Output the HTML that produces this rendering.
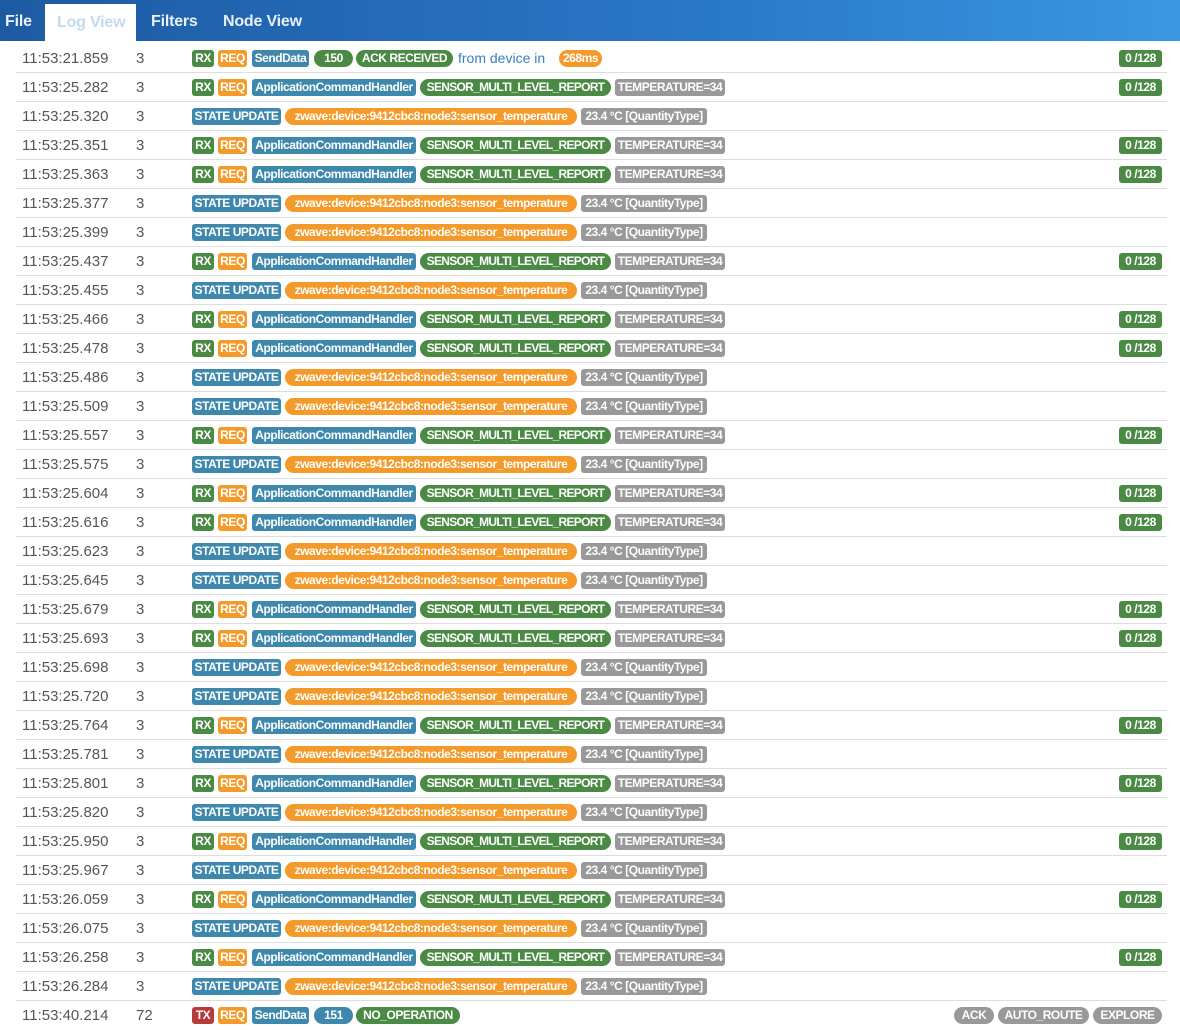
<!DOCTYPE html>
<html><head><meta charset="utf-8"><style>
*{margin:0;padding:0;box-sizing:border-box}
body{width:1180px;height:1029px;overflow:hidden;background:#fff;font-family:"Liberation Sans",sans-serif;position:relative}
.hdr{position:absolute;left:0;top:0;width:1180px;height:41px;background:linear-gradient(90deg,#1d5aa2 0%,#2a78c8 60%,#3a97e2 100%)}
.tab{position:absolute;top:13px;font-size:16px;color:#e8f0fa;font-weight:bold;letter-spacing:-0.2px;white-space:nowrap}
.tab.act{top:4px;height:37px;background:#fff;color:#c5d8ee;padding:10px 12px 0;font-weight:bold}
.row{position:absolute;left:16px;width:1151px;height:29px;border-bottom:1px solid #ddd}
.t{position:absolute;left:6px;top:6px;font-size:15px;color:#555}
.l{position:absolute;left:120px;top:6px;font-size:15px;color:#555}
.b{position:absolute;top:6px;height:17px;line-height:17px;font-size:12px;font-weight:bold;color:#fff;text-align:center;border-radius:3px;letter-spacing:-0.45px;white-space:nowrap;overflow:hidden}
.p{border-radius:9px}
.s{letter-spacing:-0.7px}
.g{background:#4a8a44}.o{background:#f39a2a}.bl{background:#3f88ad}.gr{background:#999}.r{background:#b73b3b}
</style></head><body>
<div class="hdr">
<span class="tab" style="left:5px">File</span>
<span class="tab act" style="left:45px;width:91px">Log View</span>
<span class="tab" style="left:151px">Filters</span>
<span class="tab" style="left:223px">Node View</span>
</div>

<div class="row" style="top:44px"><span class="t">11:53:21.859</span><span class="l">3</span><span class="b g" style="left:176px;width:22px">RX</span><span class="b o" style="left:202px;width:29px">REQ</span><span class="b bl" style="left:236px;width:57px">SendData</span><span class="b g p" style="left:298px;width:39px">150</span><span class="b g p" style="left:340px;width:97px">ACK RECEIVED</span><span style="position:absolute;left:442px;top:6px;font-size:14px;color:#3a7fc0">from device in</span><span class="b o p" style="left:543px;width:43px">268ms</span><span class="b g" style="left:1103px;width:43px">0 /128</span></div>

<div class="row" style="top:73px"><span class="t">11:53:25.282</span><span class="l">3</span><span class="b g" style="left:176px;width:22px">RX</span><span class="b o" style="left:202px;width:29px">REQ</span><span class="b bl" style="left:236px;width:164px">ApplicationCommandHandler</span><span class="b g p s" style="left:404px;width:191px">SENSOR_MULTI_LEVEL_REPORT</span><span class="b gr" style="left:599px;width:110px">TEMPERATURE=34</span><span class="b g" style="left:1103px;width:43px">0 /128</span></div>
<div class="row" style="top:102px"><span class="t">11:53:25.320</span><span class="l">3</span><span class="b bl" style="left:176px;width:89px">STATE UPDATE</span><span class="b o p" style="left:269px;width:292px">zwave:device:9412cbc8:node3:sensor_temperature</span><span class="b gr" style="left:565px;width:126px">23.4 °C [QuantityType]</span></div>
<div class="row" style="top:131px"><span class="t">11:53:25.351</span><span class="l">3</span><span class="b g" style="left:176px;width:22px">RX</span><span class="b o" style="left:202px;width:29px">REQ</span><span class="b bl" style="left:236px;width:164px">ApplicationCommandHandler</span><span class="b g p s" style="left:404px;width:191px">SENSOR_MULTI_LEVEL_REPORT</span><span class="b gr" style="left:599px;width:110px">TEMPERATURE=34</span><span class="b g" style="left:1103px;width:43px">0 /128</span></div>
<div class="row" style="top:160px"><span class="t">11:53:25.363</span><span class="l">3</span><span class="b g" style="left:176px;width:22px">RX</span><span class="b o" style="left:202px;width:29px">REQ</span><span class="b bl" style="left:236px;width:164px">ApplicationCommandHandler</span><span class="b g p s" style="left:404px;width:191px">SENSOR_MULTI_LEVEL_REPORT</span><span class="b gr" style="left:599px;width:110px">TEMPERATURE=34</span><span class="b g" style="left:1103px;width:43px">0 /128</span></div>
<div class="row" style="top:189px"><span class="t">11:53:25.377</span><span class="l">3</span><span class="b bl" style="left:176px;width:89px">STATE UPDATE</span><span class="b o p" style="left:269px;width:292px">zwave:device:9412cbc8:node3:sensor_temperature</span><span class="b gr" style="left:565px;width:126px">23.4 °C [QuantityType]</span></div>
<div class="row" style="top:218px"><span class="t">11:53:25.399</span><span class="l">3</span><span class="b bl" style="left:176px;width:89px">STATE UPDATE</span><span class="b o p" style="left:269px;width:292px">zwave:device:9412cbc8:node3:sensor_temperature</span><span class="b gr" style="left:565px;width:126px">23.4 °C [QuantityType]</span></div>
<div class="row" style="top:247px"><span class="t">11:53:25.437</span><span class="l">3</span><span class="b g" style="left:176px;width:22px">RX</span><span class="b o" style="left:202px;width:29px">REQ</span><span class="b bl" style="left:236px;width:164px">ApplicationCommandHandler</span><span class="b g p s" style="left:404px;width:191px">SENSOR_MULTI_LEVEL_REPORT</span><span class="b gr" style="left:599px;width:110px">TEMPERATURE=34</span><span class="b g" style="left:1103px;width:43px">0 /128</span></div>
<div class="row" style="top:276px"><span class="t">11:53:25.455</span><span class="l">3</span><span class="b bl" style="left:176px;width:89px">STATE UPDATE</span><span class="b o p" style="left:269px;width:292px">zwave:device:9412cbc8:node3:sensor_temperature</span><span class="b gr" style="left:565px;width:126px">23.4 °C [QuantityType]</span></div>
<div class="row" style="top:305px"><span class="t">11:53:25.466</span><span class="l">3</span><span class="b g" style="left:176px;width:22px">RX</span><span class="b o" style="left:202px;width:29px">REQ</span><span class="b bl" style="left:236px;width:164px">ApplicationCommandHandler</span><span class="b g p s" style="left:404px;width:191px">SENSOR_MULTI_LEVEL_REPORT</span><span class="b gr" style="left:599px;width:110px">TEMPERATURE=34</span><span class="b g" style="left:1103px;width:43px">0 /128</span></div>
<div class="row" style="top:334px"><span class="t">11:53:25.478</span><span class="l">3</span><span class="b g" style="left:176px;width:22px">RX</span><span class="b o" style="left:202px;width:29px">REQ</span><span class="b bl" style="left:236px;width:164px">ApplicationCommandHandler</span><span class="b g p s" style="left:404px;width:191px">SENSOR_MULTI_LEVEL_REPORT</span><span class="b gr" style="left:599px;width:110px">TEMPERATURE=34</span><span class="b g" style="left:1103px;width:43px">0 /128</span></div>
<div class="row" style="top:363px"><span class="t">11:53:25.486</span><span class="l">3</span><span class="b bl" style="left:176px;width:89px">STATE UPDATE</span><span class="b o p" style="left:269px;width:292px">zwave:device:9412cbc8:node3:sensor_temperature</span><span class="b gr" style="left:565px;width:126px">23.4 °C [QuantityType]</span></div>
<div class="row" style="top:392px"><span class="t">11:53:25.509</span><span class="l">3</span><span class="b bl" style="left:176px;width:89px">STATE UPDATE</span><span class="b o p" style="left:269px;width:292px">zwave:device:9412cbc8:node3:sensor_temperature</span><span class="b gr" style="left:565px;width:126px">23.4 °C [QuantityType]</span></div>
<div class="row" style="top:421px"><span class="t">11:53:25.557</span><span class="l">3</span><span class="b g" style="left:176px;width:22px">RX</span><span class="b o" style="left:202px;width:29px">REQ</span><span class="b bl" style="left:236px;width:164px">ApplicationCommandHandler</span><span class="b g p s" style="left:404px;width:191px">SENSOR_MULTI_LEVEL_REPORT</span><span class="b gr" style="left:599px;width:110px">TEMPERATURE=34</span><span class="b g" style="left:1103px;width:43px">0 /128</span></div>
<div class="row" style="top:450px"><span class="t">11:53:25.575</span><span class="l">3</span><span class="b bl" style="left:176px;width:89px">STATE UPDATE</span><span class="b o p" style="left:269px;width:292px">zwave:device:9412cbc8:node3:sensor_temperature</span><span class="b gr" style="left:565px;width:126px">23.4 °C [QuantityType]</span></div>
<div class="row" style="top:479px"><span class="t">11:53:25.604</span><span class="l">3</span><span class="b g" style="left:176px;width:22px">RX</span><span class="b o" style="left:202px;width:29px">REQ</span><span class="b bl" style="left:236px;width:164px">ApplicationCommandHandler</span><span class="b g p s" style="left:404px;width:191px">SENSOR_MULTI_LEVEL_REPORT</span><span class="b gr" style="left:599px;width:110px">TEMPERATURE=34</span><span class="b g" style="left:1103px;width:43px">0 /128</span></div>
<div class="row" style="top:508px"><span class="t">11:53:25.616</span><span class="l">3</span><span class="b g" style="left:176px;width:22px">RX</span><span class="b o" style="left:202px;width:29px">REQ</span><span class="b bl" style="left:236px;width:164px">ApplicationCommandHandler</span><span class="b g p s" style="left:404px;width:191px">SENSOR_MULTI_LEVEL_REPORT</span><span class="b gr" style="left:599px;width:110px">TEMPERATURE=34</span><span class="b g" style="left:1103px;width:43px">0 /128</span></div>
<div class="row" style="top:537px"><span class="t">11:53:25.623</span><span class="l">3</span><span class="b bl" style="left:176px;width:89px">STATE UPDATE</span><span class="b o p" style="left:269px;width:292px">zwave:device:9412cbc8:node3:sensor_temperature</span><span class="b gr" style="left:565px;width:126px">23.4 °C [QuantityType]</span></div>
<div class="row" style="top:566px"><span class="t">11:53:25.645</span><span class="l">3</span><span class="b bl" style="left:176px;width:89px">STATE UPDATE</span><span class="b o p" style="left:269px;width:292px">zwave:device:9412cbc8:node3:sensor_temperature</span><span class="b gr" style="left:565px;width:126px">23.4 °C [QuantityType]</span></div>
<div class="row" style="top:595px"><span class="t">11:53:25.679</span><span class="l">3</span><span class="b g" style="left:176px;width:22px">RX</span><span class="b o" style="left:202px;width:29px">REQ</span><span class="b bl" style="left:236px;width:164px">ApplicationCommandHandler</span><span class="b g p s" style="left:404px;width:191px">SENSOR_MULTI_LEVEL_REPORT</span><span class="b gr" style="left:599px;width:110px">TEMPERATURE=34</span><span class="b g" style="left:1103px;width:43px">0 /128</span></div>
<div class="row" style="top:624px"><span class="t">11:53:25.693</span><span class="l">3</span><span class="b g" style="left:176px;width:22px">RX</span><span class="b o" style="left:202px;width:29px">REQ</span><span class="b bl" style="left:236px;width:164px">ApplicationCommandHandler</span><span class="b g p s" style="left:404px;width:191px">SENSOR_MULTI_LEVEL_REPORT</span><span class="b gr" style="left:599px;width:110px">TEMPERATURE=34</span><span class="b g" style="left:1103px;width:43px">0 /128</span></div>
<div class="row" style="top:653px"><span class="t">11:53:25.698</span><span class="l">3</span><span class="b bl" style="left:176px;width:89px">STATE UPDATE</span><span class="b o p" style="left:269px;width:292px">zwave:device:9412cbc8:node3:sensor_temperature</span><span class="b gr" style="left:565px;width:126px">23.4 °C [QuantityType]</span></div>
<div class="row" style="top:682px"><span class="t">11:53:25.720</span><span class="l">3</span><span class="b bl" style="left:176px;width:89px">STATE UPDATE</span><span class="b o p" style="left:269px;width:292px">zwave:device:9412cbc8:node3:sensor_temperature</span><span class="b gr" style="left:565px;width:126px">23.4 °C [QuantityType]</span></div>
<div class="row" style="top:711px"><span class="t">11:53:25.764</span><span class="l">3</span><span class="b g" style="left:176px;width:22px">RX</span><span class="b o" style="left:202px;width:29px">REQ</span><span class="b bl" style="left:236px;width:164px">ApplicationCommandHandler</span><span class="b g p s" style="left:404px;width:191px">SENSOR_MULTI_LEVEL_REPORT</span><span class="b gr" style="left:599px;width:110px">TEMPERATURE=34</span><span class="b g" style="left:1103px;width:43px">0 /128</span></div>
<div class="row" style="top:740px"><span class="t">11:53:25.781</span><span class="l">3</span><span class="b bl" style="left:176px;width:89px">STATE UPDATE</span><span class="b o p" style="left:269px;width:292px">zwave:device:9412cbc8:node3:sensor_temperature</span><span class="b gr" style="left:565px;width:126px">23.4 °C [QuantityType]</span></div>
<div class="row" style="top:769px"><span class="t">11:53:25.801</span><span class="l">3</span><span class="b g" style="left:176px;width:22px">RX</span><span class="b o" style="left:202px;width:29px">REQ</span><span class="b bl" style="left:236px;width:164px">ApplicationCommandHandler</span><span class="b g p s" style="left:404px;width:191px">SENSOR_MULTI_LEVEL_REPORT</span><span class="b gr" style="left:599px;width:110px">TEMPERATURE=34</span><span class="b g" style="left:1103px;width:43px">0 /128</span></div>
<div class="row" style="top:798px"><span class="t">11:53:25.820</span><span class="l">3</span><span class="b bl" style="left:176px;width:89px">STATE UPDATE</span><span class="b o p" style="left:269px;width:292px">zwave:device:9412cbc8:node3:sensor_temperature</span><span class="b gr" style="left:565px;width:126px">23.4 °C [QuantityType]</span></div>
<div class="row" style="top:827px"><span class="t">11:53:25.950</span><span class="l">3</span><span class="b g" style="left:176px;width:22px">RX</span><span class="b o" style="left:202px;width:29px">REQ</span><span class="b bl" style="left:236px;width:164px">ApplicationCommandHandler</span><span class="b g p s" style="left:404px;width:191px">SENSOR_MULTI_LEVEL_REPORT</span><span class="b gr" style="left:599px;width:110px">TEMPERATURE=34</span><span class="b g" style="left:1103px;width:43px">0 /128</span></div>
<div class="row" style="top:856px"><span class="t">11:53:25.967</span><span class="l">3</span><span class="b bl" style="left:176px;width:89px">STATE UPDATE</span><span class="b o p" style="left:269px;width:292px">zwave:device:9412cbc8:node3:sensor_temperature</span><span class="b gr" style="left:565px;width:126px">23.4 °C [QuantityType]</span></div>
<div class="row" style="top:885px"><span class="t">11:53:26.059</span><span class="l">3</span><span class="b g" style="left:176px;width:22px">RX</span><span class="b o" style="left:202px;width:29px">REQ</span><span class="b bl" style="left:236px;width:164px">ApplicationCommandHandler</span><span class="b g p s" style="left:404px;width:191px">SENSOR_MULTI_LEVEL_REPORT</span><span class="b gr" style="left:599px;width:110px">TEMPERATURE=34</span><span class="b g" style="left:1103px;width:43px">0 /128</span></div>
<div class="row" style="top:914px"><span class="t">11:53:26.075</span><span class="l">3</span><span class="b bl" style="left:176px;width:89px">STATE UPDATE</span><span class="b o p" style="left:269px;width:292px">zwave:device:9412cbc8:node3:sensor_temperature</span><span class="b gr" style="left:565px;width:126px">23.4 °C [QuantityType]</span></div>
<div class="row" style="top:943px"><span class="t">11:53:26.258</span><span class="l">3</span><span class="b g" style="left:176px;width:22px">RX</span><span class="b o" style="left:202px;width:29px">REQ</span><span class="b bl" style="left:236px;width:164px">ApplicationCommandHandler</span><span class="b g p s" style="left:404px;width:191px">SENSOR_MULTI_LEVEL_REPORT</span><span class="b gr" style="left:599px;width:110px">TEMPERATURE=34</span><span class="b g" style="left:1103px;width:43px">0 /128</span></div>
<div class="row" style="top:972px"><span class="t">11:53:26.284</span><span class="l">3</span><span class="b bl" style="left:176px;width:89px">STATE UPDATE</span><span class="b o p" style="left:269px;width:292px">zwave:device:9412cbc8:node3:sensor_temperature</span><span class="b gr" style="left:565px;width:126px">23.4 °C [QuantityType]</span></div>

<div class="row" style="top:1001px;border-bottom:none"><span class="t">11:53:40.214</span><span class="l">72</span><span class="b r" style="left:176px;width:22px">TX</span><span class="b o" style="left:202px;width:29px">REQ</span><span class="b bl" style="left:236px;width:57px">SendData</span><span class="b bl p" style="left:298px;width:39px">151</span><span class="b g p" style="left:340px;width:104px">NO_OPERATION</span><span class="b gr p" style="left:938px;width:40px">ACK</span><span class="b gr p" style="left:982px;width:91px">AUTO_ROUTE</span><span class="b gr p" style="left:1077px;width:69px">EXPLORE</span></div>
</body></html>
